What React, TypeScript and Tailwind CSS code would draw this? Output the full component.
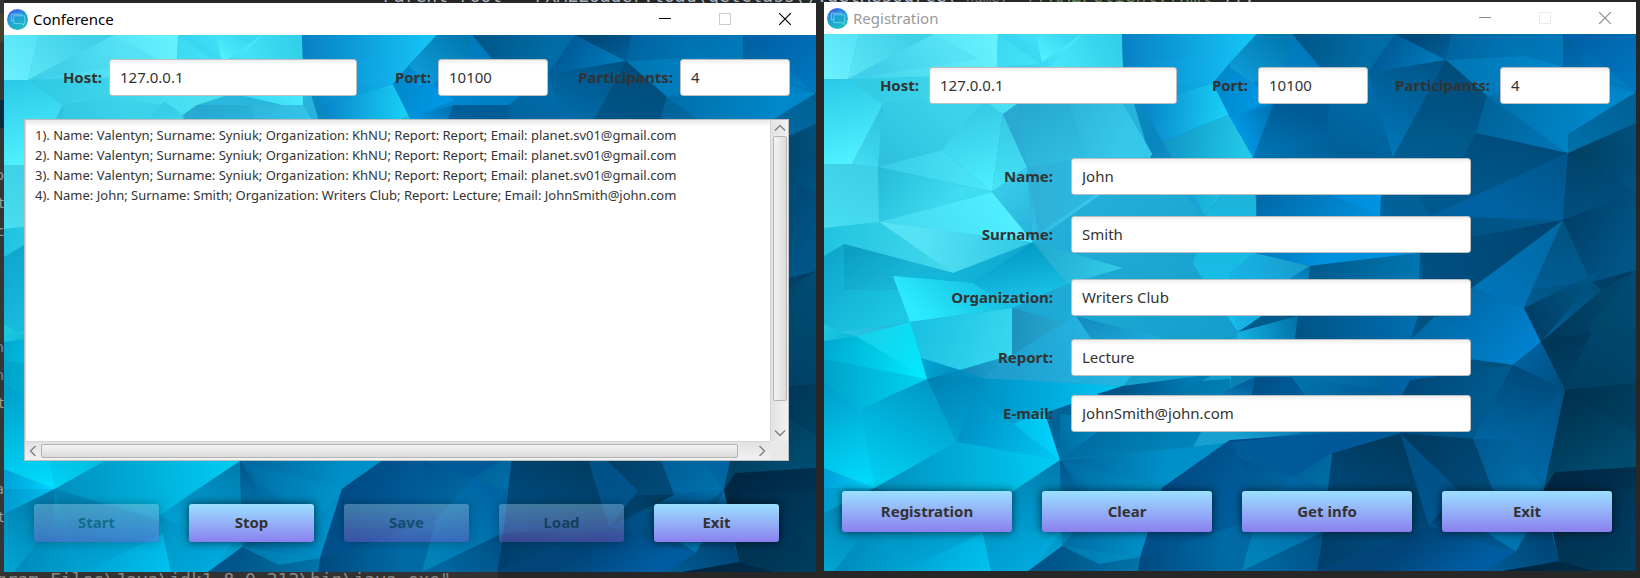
import React, { useId } from "react";

type Facet = [points: string, axis: [number, number, number, number], from: string, to: string];

/* Low-poly wallpaper shared by both windows, drawn back to front on an 812 x 538 canvas. */
const FACETS: Facet[] = [
  ["190,60 299,33 326,123 381,182 433,182 431,219 406,239 414,298 410,360 299,352 160,344 188,274 209,208 203,133", [200, 80, 400, 330], "#2bb8df", "#129ccb"],
  ["0,0 35,0 24,45 0,45", [35, 0, 0, 45], "#55e2f5", "#6cf0ff"],
  ["35,0 110,0 24,45", [80, 0, 24, 45], "#40d0e8", "#5ce6f6"],
  ["110,0 174,0 173,45 100,66 24,45", [24, 45, 174, 0], "#3ccfe8", "#68f2ff"],
  ["110,0 155,25 24,45", [110, 0, 60, 40], "#55e2f4", "#3fcfe8"],
  ["174,0 298,0 299,75 173,45", [180, 60, 250, 0], "#2cc4e6", "#4aecff"],
  ["174,0 216,30 173,33", [174, 0, 216, 30], "#3cd8f2", "#46e2f8"],
  ["212,0 258,0 218,28", [235, 0, 218, 28], "#3bd8f2", "#56f4ff"],
  ["258,0 298,0 299,33 226,33", [298, 0, 226, 33], "#30cde8", "#48e8fa"],
  ["0,45 24,45 59,70 28,130 0,130", [10, 45, 28, 130], "#2bcae8", "#50f2ff"],
  ["24,45 59,70 110,64 179,80 193,70 240,55 173,40", [24, 45, 190, 60], "#30c8e2", "#4ae0f2"],
  ["59,70 110,64 160,70 118,116 54,133", [118, 70, 54, 133], "#3bd2ea", "#2dbfdd"],
  ["59,70 54,133 28,130", [59, 70, 28, 130], "#2cc0dc", "#42dcf0"],
  ["160,66 179,80 168,158 118,116", [140, 80, 168, 158], "#36cbe6", "#50f0ff"],
  ["179,80 203,133 168,158", [179, 80, 168, 158], "#36c8e4", "#46e4f6"],
  ["193,70 179,80 203,133 209,208 330,123 299,70", [200, 80, 290, 130], "#2aa9d2", "#36c8ea"],
  ["193,70 246,70 262,124 203,133", [200, 70, 240, 130], "#25a8d0", "#30bce0"],
  ["203,133 262,124 326,123 214,200", [210, 133, 310, 140], "#30b0d8", "#28bfe6"],
  ["203,133 168,158 209,208", [168, 158, 209, 208], "#38cbea", "#26b2da"],
  ["118,116 54,133 168,158", [60, 133, 168, 158], "#3acce6", "#4ee8fa"],
  ["54,133 168,158 55,188", [54, 133, 120, 180], "#25bad8", "#40dcf0"],
  ["28,130 54,133 55,188 0,222 0,130", [40, 130, 0, 222], "#3ccfe6", "#4de2f4"],
  ["55,188 168,158 209,208 129,239 0,194", [60, 220, 168, 158], "#42d3eb", "#50eeff"],
  ["55,188 209,208 129,239", [209, 208, 100, 200], "#30c6e4", "#54e2f4"],
  ["0,194 55,188 129,239 20,210 0,222", [0, 200, 129, 230], "#20c4e0", "#45d8ec"],
  ["0,222 20,210 129,239 69,242 86,288 15,298 0,307", [0, 215, 70, 290], "#0ea5ca", "#1dc8e6"],
  ["20,210 129,239 69,242 74,256 20,256", [30, 215, 60, 256], "#0c9fc4", "#18b5d8"],
  ["129,239 209,208 149,249 69,242", [110, 230, 209, 208], "#12b8da", "#10a6cf"],
  ["69,242 149,249 188,274 86,288", [150, 240, 100, 288], "#16c2e2", "#2cebff"],
  ["209,208 149,249 188,274 243,250", [180, 220, 190, 274], "#059ec8", "#1cc6ec"],
  ["209,208 299,234 243,250", [209, 208, 280, 245], "#1fa8cc", "#30c6e6"],
  ["0,307 32,302 15,298 0,290", [0, 290, 20, 305], "#20cbe0", "#0fbcd8"],
  ["0,307 32,302 97,324 103,345 36,375 0,347", [0, 307, 103, 345], "#00a8cf", "#00eeff"],
  ["0,325 103,345 36,375 0,347", [0, 330, 103, 345], "#00a2c9", "#00d4f0"],
  ["86,288 188,274 188,321 136,336 97,324", [86, 288, 188, 321], "#18bfe0", "#38d8f0"],
  ["32,302 86,288 97,324 103,345", [32, 302, 103, 345], "#18cfe8", "#00eaff"],
  ["0,347 36,375 51,454 0,434", [0, 350, 51, 454], "#009cc9", "#00e0ff"],
  ["36,375 103,345 133,408 51,454", [103, 345, 51, 454], "#0098c4", "#00d2f4"],
  ["97,324 136,336 103,345", [97, 324, 130, 345], "#00a8d6", "#0090c0"],
  ["136,336 188,321 160,344", [136, 336, 188, 321], "#1488b8", "#20a8d4"],
  ["103,345 136,336 160,344 299,352 221,379 133,408", [103, 345, 280, 360], "#007fb2", "#00c0f0"],
  ["103,345 160,344 150,385 133,408", [110, 345, 140, 400], "#0082b4", "#009fce"],
  ["133,408 221,379 236,426 188,458 51,454", [110, 420, 236, 420], "#0093c2", "#00d4ff"],
  ["133,408 150,360 236,426", [140, 380, 236, 426], "#0090c4", "#00c8f6"],
  ["188,274 252,282 188,321", [188, 280, 240, 285], "#1c90bc", "#28a8d0"],
  ["188,274 299,305 336,304 252,282 350,256 243,250", [188, 274, 330, 290], "#1ca4d0", "#20b8e0"],
  ["188,321 252,282 299,352 160,344", [170, 340, 290, 300], "#1f9ccc", "#25b8e4"],
  ["252,282 336,304 299,352", [260, 280, 299, 352], "#1488bc", "#1fbbe8"],
  ["0,454 51,454 0,434", [0, 440, 51, 454], "#00a0d8", "#00d4ff"],
  ["0,454 51,454 0,479", [0, 454, 40, 460], "#0098cc", "#00b8e8"],
  ["51,454 133,408 236,426 188,458 155,481 160,498 167,537 0,537 0,479", [40, 454, 167, 537], "#0083b4", "#00c2f0"],
  ["51,454 133,408 236,426 155,481 90,465", [51, 454, 220, 440], "#008fbe", "#00c8ef"],
  ["0,479 51,454 48,490 10,537 0,537", [51, 454, 10, 537], "#0077a8", "#00a4d2"],
  ["51,454 155,485 160,498 80,537", [60, 460, 100, 537], "#0082b2", "#00a8d8"],
  ["188,458 236,426 238,512 204,537 167,537 155,481", [236, 430, 180, 537], "#007cae", "#00b0e2"],
  ["155,481 195,497 238,498 204,537 167,537", [155, 481, 200, 537], "#0091c2", "#00a9dc"],
  ["221,379 299,352 406,345 410,408 369,413 236,426", [280, 360, 330, 425], "#006398", "#0083b8"],
  ["299,352 390,340 336,370 273,360", [300, 352, 370, 350], "#005488", "#007cb4"],
  ["236,426 290,385 236,380", [236, 400, 280, 390], "#0070a4", "#0088c0"],
  ["236,426 369,413 406,406 338,454 316,523 238,512", [236, 430, 338, 454], "#00649a", "#0090c8"],
  ["236,426 238,512 268,475", [236, 430, 250, 490], "#00568c", "#0080b8"],
  ["236,426 338,454 305,495", [236, 426, 330, 460], "#0069a0", "#0092c8"],
  ["238,512 316,523 314,537 204,537", [238, 512, 316, 530], "#00568a", "#0074a8"],
  ["238,512 316,523 275,530", [238, 512, 300, 525], "#0076aa", "#008cc0"],
  ["298,0 433,0 406,29 389,49 318,70 299,33", [298, 0, 420, 0], "#0780c4", "#14c0f4"],
  ["299,33 405,17 389,49 310,48", [299, 33, 400, 35], "#0884cc", "#12b6ee"],
  ["318,70 389,49 405,81 338,108", [318, 70, 400, 75], "#0882c8", "#18cef4"],
  ["338,108 405,81 429,123 381,182 330,123", [338, 108, 420, 120], "#0f94c4", "#22c8e8"],
  ["338,108 326,123 381,182 348,123", [330, 120, 370, 150], "#0d86c0", "#18a4d8"],
  ["433,0 468,0 544,39 505,70 429,123 406,83 389,49", [468, 0, 400, 80], "#0079ba", "#0090de"],
  ["433,0 468,0 461,33 406,60 406,29", [455, 0, 410, 50], "#0079b0", "#10a0dc"],
  ["389,49 406,33 450,65 406,83", [389, 49, 440, 65], "#0087ca", "#0098e4"],
  ["468,0 571,0 544,39 496,33", [480, 0, 545, 20], "#00588a", "#006ca6"],
  ["571,0 622,26 544,39", [571, 0, 610, 26], "#005c98", "#0078b8"],
  ["571,0 628,0 622,26", [600, 0, 622, 26], "#004b7c", "#005f98"],
  ["628,0 739,0 739,33 812,58 744,119 652,99 663,62 622,26", [628, 20, 744, 110], "#006ca8", "#0082c6"],
  ["622,26 700,22 739,33 663,62", [622, 26, 739, 33], "#0074b0", "#0089d0"],
  ["628,0 680,0 700,22 622,26", [628, 0, 700, 22], "#0064a0", "#0078b8"],
  ["739,0 812,0 812,58 770,30", [760, 0, 812, 50], "#0062a8", "#0076c0"],
  ["739,0 812,58 739,33", [739, 0, 790, 50], "#005c9c", "#007cc0"],
  ["544,39 622,26 569,123 504,105 505,70", [600, 26, 560, 123], "#005588", "#0078bc"],
  ["544,39 569,123 504,105 505,70", [544, 39, 504, 110], "#006eac", "#006098"],
  ["622,26 663,62 652,99 639,123 569,123", [622, 26, 610, 123], "#004b78", "#005c90"],
  ["663,62 744,119 652,99", [663, 62, 744, 119], "#006298", "#0078ba"],
  ["663,62 812,58 744,119", [663, 62, 770, 90], "#006ea8", "#0088ca"],
  ["449,70 505,70 504,105 429,123", [449, 70, 429, 123], "#005c96", "#0077b8"],
  ["406,83 449,70 429,123", [449, 70, 410, 90], "#0070b0", "#0098e4"],
  ["429,123 504,105 569,123 606,182 556,182 506,161 433,170", [504, 105, 440, 170], "#006098", "#007dc2"],
  ["381,182 429,123 433,182 431,219 406,239 414,298 369,230", [400, 130, 400, 280], "#20b0d8", "#14c0e8"],
  ["433,161 506,161 556,182 596,219 486,232 431,219", [440, 161, 500, 225], "#006aa8", "#0090dc"],
  ["506,161 556,182 557,161", [506, 161, 557, 170], "#0088d4", "#0094e4"],
  ["431,219 486,232 466,245 414,298 406,239", [406, 240, 480, 230], "#18b4e8", "#189ccc"],
  ["486,232 596,219 594,282 474,282 414,298", [486, 232, 590, 270], "#005a8c", "#0078b4"],
  ["466,245 486,232 484,250 414,298", [486, 232, 414, 298], "#0077b4", "#18c4f4"],
  ["414,298 474,282 471,305 410,315", [474, 282, 414, 298], "#0070a8", "#14b0e0"],
  ["474,282 594,282 587,305 471,305", [474, 300, 594, 285], "#005486", "#006eb0"],
  ["410,305 587,305 554,355 508,375 406,360", [420, 305, 554, 340], "#0c80b4", "#0066a0"],
  ["399,358 431,343 425,375 479,399 406,408 369,413", [425, 350, 406, 400], "#0060a0", "#18a0d0"],
  ["431,343 468,343 508,399 425,375", [440, 343, 500, 390], "#005088", "#0068a8"],
  ["468,343 554,355 563,399 508,399", [468, 343, 554, 370], "#0074ac", "#005c98"],
  ["594,282 606,182 648,254 587,305", [606, 182, 590, 300], "#003f66", "#005486"],
  ["586,346 646,337 689,331 649,405 576,399 560,375", [586, 346, 660, 380], "#004878", "#005a90"],
  ["554,355 587,305 646,320 646,337 586,346 576,365", [560, 350, 640, 325], "#0060a0", "#0072b4"],
  ["652,99 744,119 606,182 639,123", [652, 99, 640, 170], "#004c7c", "#005a90"],
  ["744,119 812,89 812,119", [744, 119, 812, 95], "#003f60", "#00507c"],
  ["744,100 812,58 812,89 744,119", [744, 119, 812, 60], "#0070a8", "#006094"],
  ["744,119 739,186 649,203 606,182", [744, 119, 640, 190], "#005c94", "#005484"],
  ["744,119 739,186 606,182", [744, 119, 700, 186], "#00548a", "#0062a0"],
  ["744,119 812,119 812,158 739,186", [744, 119, 800, 160], "#00405f", "#005080"],
  ["744,119 812,158 739,186", [744, 119, 760, 186], "#004268", "#005080"],
  ["649,203 739,186 648,254 601,245 596,219 606,182", [739, 186, 610, 250], "#004470", "#004f80"],
  ["739,186 708,256 700,274 648,254", [739, 186, 670, 256], "#0068a0", "#0074b8"],
  ["739,186 767,248 708,256", [739, 186, 740, 256], "#00527f", "#005c94"],
  ["739,186 812,158 812,236 767,248", [739, 186, 800, 220], "#003f66", "#005486"],
  ["708,256 767,248 778,256 717,308 700,274", [767, 248, 717, 308], "#00507c", "#005f96"],
  ["648,254 700,274 717,308 689,331 587,305", [640, 270, 700, 325], "#006cac", "#0082d0"],
  ["587,305 611,282 689,331 646,325", [587, 305, 689, 331], "#0068a4", "#0080cc"],
  ["700,274 778,236 717,308", [700, 274, 770, 240], "#003f66", "#005888"],
  ["717,308 778,256 812,236 812,349 741,356", [717, 308, 800, 300], "#003556", "#00486e"],
  ["767,290 812,236 812,349 741,356", [741, 356, 812, 250], "#003e60", "#004c74"],
  ["717,308 767,298 741,356", [717, 308, 741, 356], "#003658", "#003f64"],
  ["689,331 717,308 741,356", [700, 315, 741, 350], "#0062a0", "#004f80"],
  ["689,331 741,356 683,405 649,405", [689, 331, 670, 405], "#00497a", "#0064a0"],
  ["741,356 683,405 720,455", [741, 356, 700, 430], "#005286", "#0066a4"],
  ["741,356 812,349 812,433 731,438 720,455", [741, 356, 790, 433], "#002f4c", "#004c70"],
  ["741,356 812,349 812,400", [741, 356, 812, 390], "#00304e", "#003f60"],
  ["649,405 683,405 720,455 670,470 640,430", [649, 405, 710, 455], "#005890", "#0070aa"],
  ["670,458 720,455 735,527 692,518 605,492", [720, 455, 640, 500], "#006ca8", "#004f84"],
  ["720,455 692,518 662,498", [720, 455, 690, 510], "#005286", "#0074b0"],
  ["731,438 812,433 812,537 678,537 735,527 720,455", [731, 438, 812, 537], "#002642", "#003e60"],
  ["735,458 812,455 812,537 801,501 735,527", [735, 458, 801, 520], "#002c4a", "#003c60"],
  ["678,537 735,527 770,537", [678, 537, 735, 527], "#00233c", "#002b46"],
  ["692,518 720,470 735,527 678,537 661,537", [720, 480, 661, 537], "#004070", "#005c94"],
  ["576,399 649,405 670,460 605,492 499,498 508,419", [560, 405, 520, 498], "#003a5e", "#004f84"],
  ["576,399 649,405 670,460 634,460", [590, 400, 660, 455], "#003a60", "#004a78"],
  ["576,399 634,456 605,492", [576, 399, 610, 485], "#004e80", "#005690"],
  ["499,498 605,492 493,537", [499, 498, 560, 510], "#003f6c", "#004878"],
  ["605,492 692,518 661,537 493,537", [605, 492, 640, 537], "#004478", "#005ca0"],
  ["338,454 406,406 508,399 576,399 508,419 499,498 418,537 314,537", [360, 430, 440, 537], "#004682", "#007ab0"],
  ["406,408 508,399 576,399 508,419 469,443 417,425", [406, 408, 500, 430], "#005c98", "#005898"],
  ["338,454 406,406 417,425 432,485 406,500 316,523", [345, 454, 420, 500], "#004c86", "#0062a0"],
  ["316,523 432,485 418,537 314,537", [316, 523, 400, 520], "#004a80", "#006aa4"],
  ["432,485 469,443 504,456 499,498 418,537", [490, 456, 430, 530], "#0064a4", "#0084b8"],
  ["499,498 418,537 493,537", [499, 498, 440, 537], "#005084", "#0066a0"],
];

function Wallpaper() {
  const id = useId().replace(/[^a-zA-Z0-9]/g, "");
  return (
    <svg
      className="absolute inset-0 -z-10 h-full w-full"
      viewBox="0 0 812 537"
      preserveAspectRatio="none"
      aria-hidden="true"
    >
      <defs>
        <linearGradient id={`${id}base`}>
          <stop offset="0" stopColor="#2cc8e6" />
          <stop offset="0.5" stopColor="#0077b5" />
          <stop offset="1" stopColor="#003c62" />
        </linearGradient>
        {FACETS.map(([, [x1, y1, x2, y2], from, to], i) => (
          <linearGradient key={i} id={`${id}f${i}`} gradientUnits="userSpaceOnUse" x1={x1} y1={y1} x2={x2} y2={y2}>
            <stop offset="0" stopColor={from} />
            <stop offset="1" stopColor={to} />
          </linearGradient>
        ))}
      </defs>
      <rect width="812" height="537" fill={`url(#${id}base)`} />
      {FACETS.map(([points], i) => (
        <polygon key={i} points={points} fill={`url(#${id}f${i})`} />
      ))}
    </svg>
  );
}

function AppIcon() {
  const id = useId().replace(/[^a-zA-Z0-9]/g, "");
  return (
    <svg className="size-[21px] shrink-0" viewBox="0 0 21 21" aria-hidden="true">
      <defs>
        <linearGradient id={id} x1="0.2" y1="0" x2="0.6" y2="0.9">
          <stop offset="0" stopColor="#3f5be8" />
          <stop offset="0.5" stopColor="#1f9fd6" />
          <stop offset="1" stopColor="#1cb8c4" />
        </linearGradient>
      </defs>
      <circle cx="10.5" cy="10.5" r="10.5" fill={`url(#${id})`} />
      <g fill="none" stroke="#7fd6ee" strokeWidth="0.8" strokeLinejoin="round">
        <path d="M6.5 11H6l-1.2 1.4V11H4.3V5.2h10.4v1.3" />
        <path d="M6.8 6.8h10.9v7.8h-1.1v1.9l-2-1.9H6.8z" />
      </g>
    </svg>
  );
}

function TitleBar({ title, active }: { title: string; active: boolean }) {
  const stroke = active ? "#000000" : "#8c8c8c";
  return (
    <header className="flex h-8 shrink-0 items-center bg-white pr-px pl-[3px]">
      <AppIcon />
      <h1 className={active ? "ml-[5px] flex-1 text-[15px] text-black" : "ml-[5px] flex-1 text-[15px] text-[#999999]"}>
        {title}
      </h1>
      <button type="button" aria-label="Minimize" className="flex h-8 w-[60px] items-center justify-center">
        <svg className="size-3" viewBox="0 0 12 12" shapeRendering="crispEdges">
          <path d="M0 5.5H12" stroke={stroke} />
        </svg>
      </button>
      <button type="button" aria-label="Maximize" disabled className="flex h-8 w-[60px] items-center justify-center">
        <svg className="size-3" viewBox="0 0 12 12" shapeRendering="crispEdges">
          <rect x="0.5" y="0.5" width="11" height="11" fill="none" stroke={active ? "#cccccc" : "#ebebeb"} />
        </svg>
      </button>
      <button type="button" aria-label="Close" className="flex h-8 w-[60px] items-center justify-center">
        <svg className="size-3" viewBox="0 0 12 12">
          <path d="M0 0L12 12M12 0L0 12" stroke={stroke} strokeWidth="1.2" />
        </svg>
      </button>
    </header>
  );
}

const inputClass =
  "h-[37px] min-w-0 rounded-[3px] border border-[#b9bec1] bg-linear-to-b from-[#efefef] via-white via-15% to-white px-[10px] pb-[2px] text-[15px] text-[#333333] outline-none";

function ConnectionBar({ prefix, labelClass }: { prefix: string; labelClass: string }) {
  return (
    <div className={`flex items-center pr-[26px] text-[15px] font-bold text-[#333333] ${labelClass}`}>
      <label htmlFor={`${prefix}-host`} className="w-[105px] shrink-0 text-right">Host:</label>
      <input id={`${prefix}-host`} defaultValue="127.0.0.1" className={`${inputClass} flex-[248_1_248px] font-normal`} />
      <label htmlFor={`${prefix}-port`} className="w-[81px] shrink-0 text-right">Port:</label>
      <input id={`${prefix}-port`} defaultValue="10100" className={`${inputClass} flex-[110_1_110px] font-normal`} />
      <label htmlFor={`${prefix}-participants`} className="w-[132px] shrink-0 text-right">Participants:</label>
      <input id={`${prefix}-participants`} defaultValue="4" className={`${inputClass} flex-[110_1_110px] font-normal`} />
    </div>
  );
}

function ActionButton({ children, tall, disabled }: { children: string; tall?: boolean; disabled?: boolean }) {
  return (
    <button
      type="button"
      disabled={disabled}
      className={`${tall ? "h-[41px]" : "h-[38px] pb-[2px]"} min-w-0 flex-1 rounded-[3px] bg-linear-to-b from-[#9ae0ff] to-[#8b80ee] text-[15px] font-bold text-[#333333] shadow-[0_0_8px_1px_rgba(0,0,0,0.55)] disabled:from-[#a0c4d8] disabled:to-[#8b50c8] disabled:opacity-40`}
    >
      {children}
    </button>
  );
}

const LOG = [
  "1). Name: Valentyn; Surname: Syniuk; Organization: KhNU; Report: Report; Email: planet.sv01@gmail.com",
  "2). Name: Valentyn; Surname: Syniuk; Organization: KhNU; Report: Report; Email: planet.sv01@gmail.com",
  "3). Name: Valentyn; Surname: Syniuk; Organization: KhNU; Report: Report; Email: planet.sv01@gmail.com",
  "4). Name: John; Surname: Smith; Organization: Writers Club; Report: Lecture; Email: JohnSmith@john.com",
].join("\n");

function Arrow({ label, d }: { label: string; d: string }) {
  return (
    <button type="button" aria-label={label} className="flex size-4 shrink-0 items-center justify-center">
      <svg className="size-3" viewBox="0 0 12 12" fill="none" stroke="#808080" strokeWidth="1.4">
        <path d={d} />
      </svg>
    </button>
  );
}

function ParticipantLog() {
  return (
    <div className="mt-[23px] mr-[27px] ml-5 grid min-h-0 flex-1 grid-cols-[minmax(0,1fr)_18px] grid-rows-[minmax(0,1fr)_19px] border border-[#bdbdbd] bg-[#ececec]">
      <textarea
        readOnly
        wrap="off"
        aria-label="Registered participants"
        value={LOG}
        className="block h-full w-full resize-none overflow-hidden border-l border-[#d8d8d8] bg-linear-to-b from-[#e8e8e8] via-white via-2% to-white px-[9px] py-[5px] text-[13px] leading-5 text-[#333333] outline-none"
      />
      <div className="flex flex-col items-center border-l border-[#d5d5d5] bg-linear-to-r from-[#e2e2e2] to-[#f2f2f2]">
        <Arrow label="Scroll up" d="M1 8.5L6 3.5L11 8.5" />
        <div className="w-[14px] flex-[265_1_0%] rounded-[2px] border border-[#b4b4b4] bg-linear-to-r from-[#f4f4f4] to-[#dcdcdc]" />
        <div className="flex-[24_1_0%]" />
        <Arrow label="Scroll down" d="M1 3.5L6 8.5L11 3.5" />
      </div>
      <div className="flex items-center border-t border-[#d5d5d5] bg-linear-to-b from-[#e2e2e2] to-[#f2f2f2]">
        <Arrow label="Scroll left" d="M8.5 1L3.5 6L8.5 11" />
        <div className="h-[14px] flex-[697_1_0%] rounded-[2px] border border-[#b4b4b4] bg-linear-to-b from-[#f4f4f4] to-[#dadada]" />
        <div className="flex-[16_1_0%]" />
        <Arrow label="Scroll right" d="M3.5 1L8.5 6L3.5 11" />
      </div>
      <div className="bg-[#e9e9e9]" />
    </div>
  );
}

function ConferenceWindow() {
  return (
    <section className="mt-[3px] mb-[6px] flex min-w-0 flex-1 flex-col" aria-label="Conference">
      <TitleBar title="Conference" active />
      <div className="relative isolate flex flex-1 flex-col pt-6 pb-[30px]">
        <Wallpaper />
        <ConnectionBar prefix="conference" labelClass="[&>label]:pr-[7px]" />
        <ParticipantLog />
        <div className="mt-[43px] mr-[37px] ml-[30px] flex gap-[30px]">
          <ActionButton disabled>Start</ActionButton>
          <ActionButton>Stop</ActionButton>
          <ActionButton disabled>Save</ActionButton>
          <ActionButton disabled>Load</ActionButton>
          <ActionButton>Exit</ActionButton>
        </div>
      </div>
    </section>
  );
}

function FormRow({ id, label, value, gap }: { id: string; label: string; value: string; gap: string }) {
  return (
    <div className={`flex items-center pr-[165px] ${gap}`}>
      <label htmlFor={id} className="w-[247px] shrink-0 pr-[18px] text-right text-[15px] font-bold text-[#333333]">
        {label}
      </label>
      <input id={id} defaultValue={value} className={`${inputClass} flex-1`} />
    </div>
  );
}

function RegistrationWindow() {
  return (
    <section className="mt-[2px] mb-[7px] flex min-w-0 flex-1 flex-col" aria-label="Registration">
      <TitleBar title="Registration" active={false} />
      <form className="relative isolate flex flex-1 flex-col pt-[33px] pb-[39px]" onSubmit={(e) => e.preventDefault()}>
        <Wallpaper />
        <ConnectionBar prefix="registration" labelClass="[&>label]:pr-[10px]" />
        <FormRow id="name" label="Name:" value="John" gap="mt-[54px]" />
        <FormRow id="surname" label="Surname:" value="Smith" gap="mt-[21px]" />
        <FormRow id="organization" label="Organization:" value="Writers Club" gap="mt-[26px]" />
        <FormRow id="report" label="Report:" value="Lecture" gap="mt-[23px]" />
        <FormRow id="email" label="E-mail:" value="JohnSmith@john.com" gap="mt-[19px]" />
        <div className="mt-auto mr-6 ml-[18px] flex gap-[30px]">
          <ActionButton tall>Registration</ActionButton>
          <ActionButton tall>Clear</ActionButton>
          <ActionButton tall>Get info</ActionButton>
          <ActionButton tall>Exit</ActionButton>
        </div>
      </form>
    </section>
  );
}

/* Line ends of the editor pane that peek out left of the Conference window. */
const EDGE_GLYPHS = [
  { glyph: "o", place: "top-[162px] text-[#9a9a9a]" },
  { glyph: "t", place: "top-[190px] text-[#9a9a9a]" },
  { glyph: "c", place: "top-[218px] text-[#9a9a9a]" },
  { glyph: "n", place: "top-[334px] text-[#6f86b8]" },
  { glyph: "n", place: "top-[362px] text-[#6f86b8]" },
  { glyph: "t", place: "top-[390px] text-[#b09a78]" },
  { glyph: "a", place: "top-[476px] text-[#9a9a9a]" },
  { glyph: "t", place: "top-[504px] text-[#9a9a9a]" },
];

/* The code editor that shows round the edges of the two windows. */
function EditorBackdrop() {
  return (
    <div
      className="absolute inset-0 -z-10 overflow-hidden bg-[#272727] font-['DejaVu_Sans_Mono',monospace] text-[18px] leading-6 whitespace-pre text-[#a9b7c6]"
      aria-hidden="true"
    >
      <div className="absolute top-0 bottom-0 left-0 w-1 bg-[#353535]">
        <div className="mt-[14px] h-7 bg-[#47412f]" />
        <div className="mt-[58px] h-7 bg-[#0b2a40]" />
        {EDGE_GLYPHS.map(({ glyph, place }) => (
          <span key={place} className={`absolute right-0 font-['Noto_Sans',sans-serif] text-[15px] ${place}`}>
            {glyph}
          </span>
        ))}
      </div>
      <div className="absolute bottom-0 left-0 h-[6px] w-[498px] bg-[#323232]" />
      <p className="absolute -top-4 left-[383px]">
        Parent root = FXMLLoader.<i>load</i>(getClass().getResource(<span className="text-[14px] text-[#787878]"> name: </span>
        <span className="text-[#6a8759]">"/FXML/client.fxml"</span>));
      </p>
      <p className="absolute -bottom-[14px] left-0 flex w-[451px] justify-end text-[#8a8a8a]">
        C:\Program Files\Java\jdk1.8.0_212\bin\java.exe"
      </p>
    </div>
  );
}

export default function App() {
  return (
    <main className="relative isolate flex min-h-screen gap-2 px-1 font-['Noto_Sans','Open_Sans',sans-serif]">
      <EditorBackdrop />
      <ConferenceWindow />
      <RegistrationWindow />
    </main>
  );
}
